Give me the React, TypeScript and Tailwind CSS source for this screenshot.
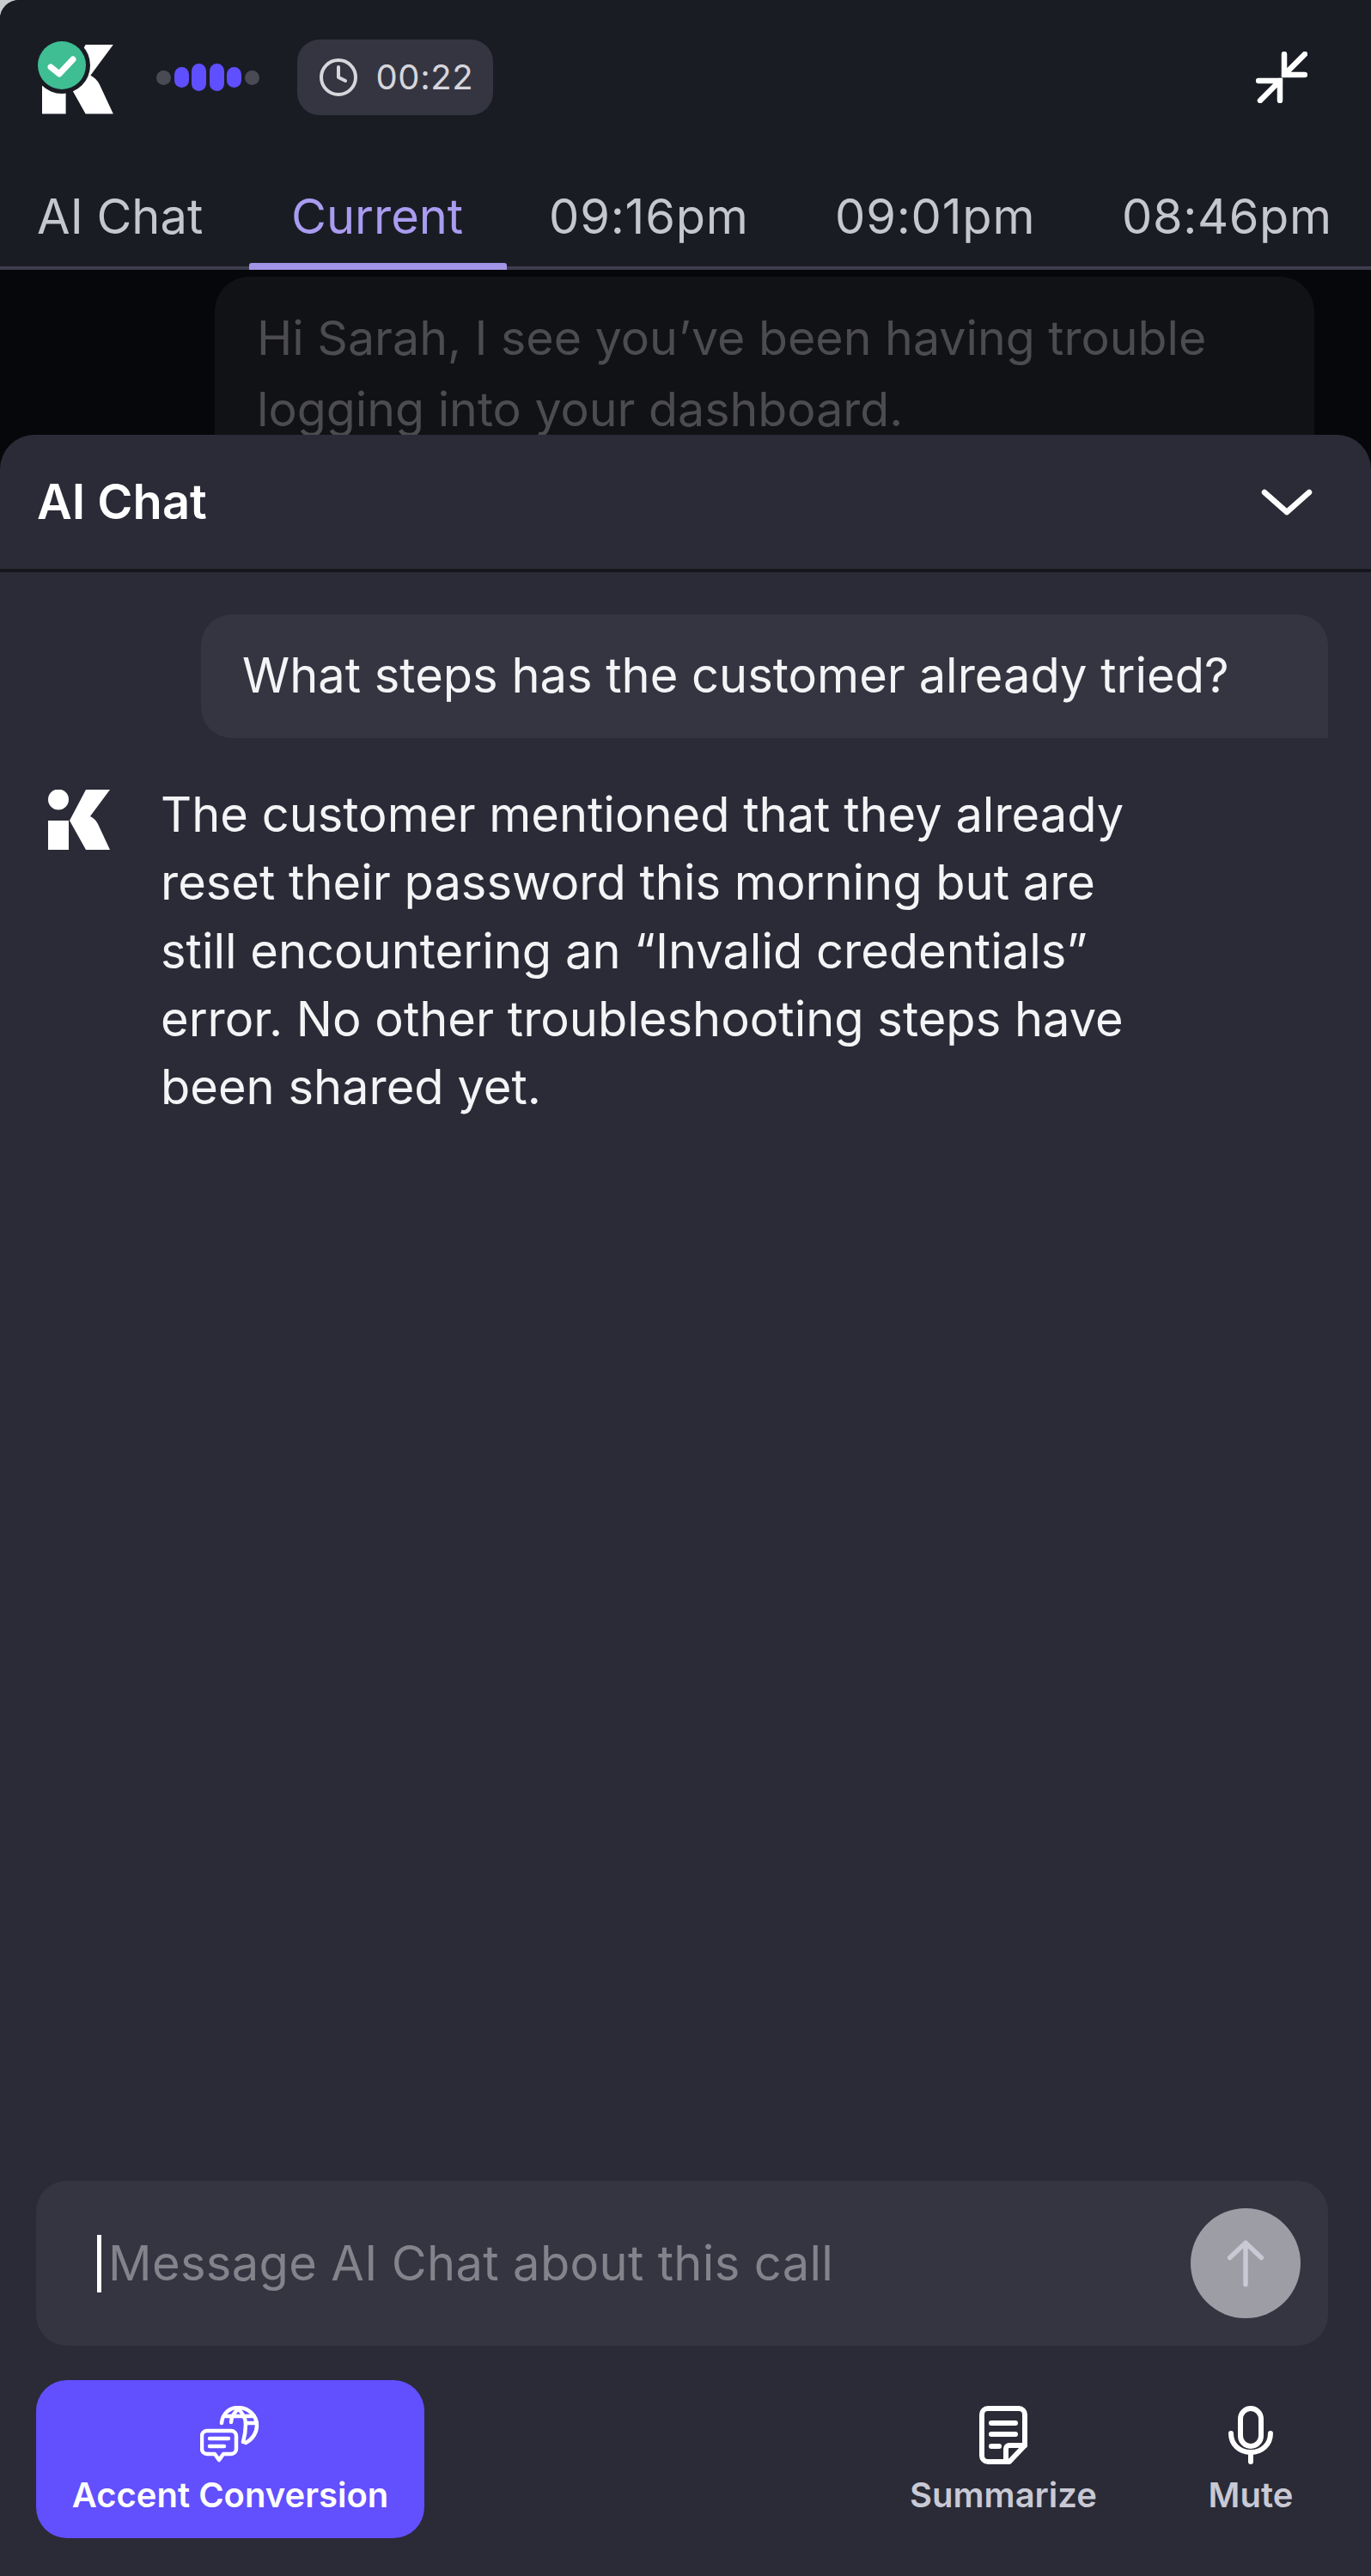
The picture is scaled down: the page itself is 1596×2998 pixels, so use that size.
import React from "react";
import { Clock } from "lucide-react";

const font = { fontFamily: "Inter, 'Liberation Sans', sans-serif" };

function KMark({ className }: { className?: string }) {
  return (
    <svg viewBox="0 0 72 70" className={className} fill="#fff">
      <circle cx="12" cy="11.5" r="12" />
      <rect x="0" y="36" width="24" height="34" />
      <path d="M44 0H72L49 31Q55 34 58 40L72 70H44L25 36Z" />
    </svg>
  );
}

function TopLogo() {
  return (
    <svg viewBox="0 0 88 88" className="w-[88px] h-[88px] shrink-0">
      <g transform="translate(5 6) scale(1.15)" fill="#fff">
        <rect x="0" y="36" width="24" height="34" />
        <path d="M44 0H72L49 31Q55 34 58 40L72 70H44L25 36Z" />
      </g>
      <circle cx="28" cy="30" r="33" fill="#1a1c24" />
      <circle cx="28" cy="30" r="28" fill="#3fbd93" />
      <path d="M15 32L25 40L41 23" fill="none" stroke="#fff" strokeWidth="7" strokeLinecap="round" strokeLinejoin="round" />
    </svg>
  );
}

function Tab({ label, active, className }: { label: string; active?: boolean; className: string }) {
  return (
    <span className={`text-[56px] leading-[64px] whitespace-nowrap ${active ? "text-[#a99cf0]" : "text-[#c6c6ce]"} ${className}`}>
      {label}
    </span>
  );
}

function ActionLabel({ children, className }: { children: React.ReactNode; className: string }) {
  return <span className={`text-[40px] leading-[48px] font-semibold whitespace-nowrap ${className}`}>{children}</span>;
}

export default function App() {
  return (
    <div style={font} className="w-[1596px] h-[2998px] bg-[#c9cbce] overflow-hidden">
      <div className="h-full flex flex-col rounded-tl-[22px] overflow-hidden bg-[#06070a]">
        <header className="bg-[#1a1c24] h-[314px] shrink-0 flex flex-col border-b-4 border-[#3e3d4e]">
          <div className="flex items-center h-[88px] mt-[46px] pl-[44px] pr-[74px]">
            <TopLogo />
            <div className="flex items-center gap-[3.5px] ml-[50px]">
              <i className="block w-[17px] h-[17px] rounded-full bg-[#4a4a55]" />
              <i className="block w-[17px] h-[24px] rounded-full bg-[#5f4ffe]" />
              <i className="block w-[17px] h-[32px] rounded-full bg-[#5f4ffe]" />
              <i className="block w-[17px] h-[32px] rounded-full bg-[#5f4ffe]" />
              <i className="block w-[17px] h-[24px] rounded-full bg-[#5f4ffe]" />
              <i className="block w-[17px] h-[17px] rounded-full bg-[#4a4a55]" />
            </div>
            <div className="ml-[44px] h-[88px] w-[228px] rounded-[26px] bg-[#353541] flex items-center pl-[24px] gap-[20px] text-[#d6d6dc]">
              <Clock className="w-[48px] h-[48px]" strokeWidth={2} />
              <span className="text-[40px] leading-none tracking-[0.6px]">00:22</span>
            </div>
            <svg viewBox="0 0 60 60" className="w-[60px] h-[60px] ml-auto" fill="none" stroke="#fff" strokeWidth="6.5" strokeLinecap="round">
              <path d="M33 3V27H57M33 27L57 3" />
              <path d="M3 34H28V57M28 34L5 57" />
            </svg>
          </div>
          <nav className="relative flex items-center h-[64px] mt-[86px] pl-[43px]">
            <Tab label="AI Chat" className="w-[296px]" />
            <Tab label="Current" active className="w-[300px]" />
            <Tab label="09:16pm" className="w-[333px] tracking-[0.8px]" />
            <Tab label="09:01pm" className="w-[334px] tracking-[0.8px]" />
            <Tab label="08:46pm" className="tracking-[0.6px]" />
            <span className="absolute left-[290px] top-[86px] w-[300px] h-[8px] rounded-t-[3px] bg-[#a294e6]" />
          </nav>
        </header>

        <div className="h-[192px] shrink-0 overflow-hidden pl-[250px] pr-[66px] pt-[8px]">
          <div className="h-[300px] rounded-[40px] bg-[#111216] pl-[49px] pt-[29px] text-[55.5px] leading-[83px] text-[#4c4c50]">
            <p className="whitespace-nowrap">Hi Sarah, I see you’ve been having trouble</p>
            <p>logging into your dashboard.</p>
          </div>
        </div>

        <section className="flex-1 min-h-0 flex flex-col rounded-t-[40px] bg-[#2a2b36]">
          <div className="h-[160px] shrink-0 flex items-center justify-between pl-[43px] pr-[68px] border-b-4 border-[#16171c]">
            <span className="text-[56px] font-semibold text-white">AI Chat</span>
            <svg viewBox="0 0 60 32" className="w-[60px] h-[32px]" fill="none" stroke="#fff" strokeWidth="6.5" strokeLinecap="round" strokeLinejoin="round">
              <path d="M4 5L30 28L56 5" />
            </svg>
          </div>

          <div className="flex-1 min-h-0 flex flex-col pl-[42px] pr-[50px] pt-[49px]">
            <div className="self-end w-[1312px] h-[144px] pb-[2px] rounded-t-[36px] rounded-bl-[36px] bg-[#353541] flex items-center pl-[48px] text-[56px] text-[#f4f4f7]">
              What steps has the customer already tried?
            </div>
            <div className="flex mt-[50px] pl-[14px]">
              <KMark className="w-[72px] h-[70px] mt-[10px] shrink-0" />
              <p className="ml-[59px] w-[1250px] text-[56px] leading-[79.3px] text-[#f4f4f7]">
                The customer mentioned that they already
                <br />
                reset their password this morning but are
                <br />
                still encountering an “Invalid credentials”
                <br />
                error. No other troubleshooting steps have
                <br />
                been shared yet.
              </p>
            </div>

            <div className="mt-auto h-[192px] shrink-0 rounded-[36px] bg-[#353541] flex items-center pl-[71px] pr-[32px]">
              <span className="w-[5px] h-[67px] bg-white shrink-0" />
              <span className="ml-[8px] text-[56px] tracking-[0.35px] text-[#83838c] whitespace-nowrap">Message AI Chat about this call</span>
              <span className="ml-auto w-[128px] h-[128px] rounded-full bg-[#9d9da6] flex items-center justify-center">
                <svg viewBox="0 0 48 62" className="w-[44px] h-[60px]" fill="none" stroke="#c9c9d5" strokeWidth="6" strokeLinecap="round" strokeLinejoin="round">
                  <path d="M24 58V5M4 24L24 5L44 24" />
                </svg>
              </span>
            </div>

            <div className="h-[184px] mt-[40px] mb-[44px] shrink-0 flex">
              <button className="w-[452px] rounded-[36px] bg-[#624ffe] flex flex-col items-center pt-[30px]">
                <svg viewBox="0 0 70 68" className="w-[70px] h-[68px]" fill="none" stroke="#fff" strokeWidth="4.5" strokeLinecap="round" strokeLinejoin="round">
                  <path d="M25 20C26 9 34 2 44 2C56 2 66 11 66 23C66 31 61 39 53 43" />
                  <path d="M46 2C39 8 36 14 36 19M44 3C50 9 53 15 53 21C53 29 52 35 50 42" />
                  <path d="M30 12H60M53 20H66" />
                  <path d="M8 29H36A6 6 0 0 1 42 35V50A6 6 0 0 1 36 56H27L22 63L17 56H8A6 6 0 0 1 2 50V35A6 6 0 0 1 8 29Z" />
                  <path d="M11 38H33M11 47H28" />
                </svg>
                <ActionLabel className="mt-[12px] text-white">Accent Conversion</ActionLabel>
              </button>

              <button className="ml-auto w-[214px] flex flex-col items-center pt-[30px]">
                <svg viewBox="0 0 56 68" className="w-[56px] h-[68px]" fill="none" stroke="#fff" strokeWidth="6" strokeLinecap="round" strokeLinejoin="round">
                  <path d="M10 3H46A7 7 0 0 1 53 10V46L35 65H10A7 7 0 0 1 3 58V10A7 7 0 0 1 10 3Z" />
                  <path d="M14 20H42M14 33H42M14 47H23" />
                  <path d="M53 46H35A4 4 0 0 0 31 50V64" />
                </svg>
                <ActionLabel className="mt-[12px] text-[#c9c9d5]">Summarize</ActionLabel>
              </button>

              <button className="ml-[132px] mr-[41px] w-[98px] flex flex-col items-center pt-[30px]">
                <svg viewBox="0 0 52 68" className="w-[52px] h-[68px]" fill="none" stroke="#fff" strokeWidth="6" strokeLinecap="round" strokeLinejoin="round">
                  <rect x="14" y="3" width="24" height="44" rx="12" />
                  <path d="M3 32C3 45 13 54 26 54C39 54 49 45 49 32M26 54V65" />
                </svg>
                <ActionLabel className="mt-[12px] text-[#c9c9d5]">Mute</ActionLabel>
              </button>
            </div>
          </div>
        </section>
      </div>
    </div>
  );
}
